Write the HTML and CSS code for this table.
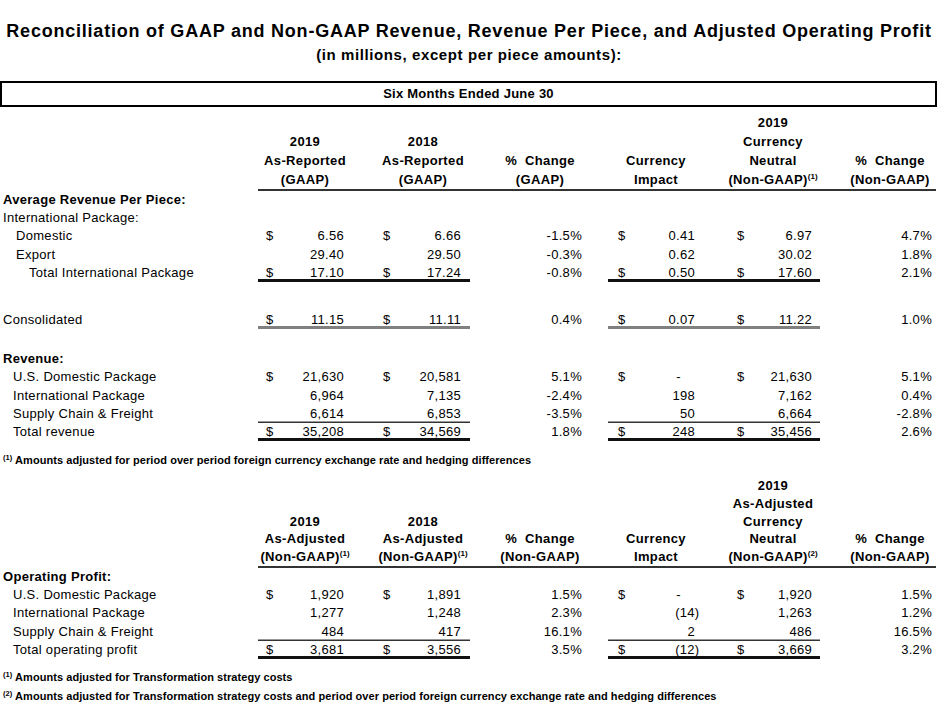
FILE: index.html
```html
<!DOCTYPE html>
<html>
<head>
<meta charset="utf-8">
<link rel="stylesheet" href="styles.css">
</head>
<body>
<div class="page">
  <h1 class="title">Reconciliation of GAAP and Non-GAAP Revenue, Revenue Per Piece, and Adjusted Operating Profit</h1>
  <p class="subtitle">(in millions, except per piece amounts):</p>
  <div class="period">Six Months Ended June 30</div>

  <div class="hdr hdr1">
    <div class="hgrid">
      <div class="hc">2019<br>As-Reported<br>(GAAP)</div>
      <div class="hc">2018<br>As-Reported<br>(GAAP)</div>
      <div class="hc">% &nbsp;Change<br>(GAAP)</div>
      <div class="hc">Currency<br>Impact</div>
      <div class="hc">2019<br>Currency<br>Neutral<br>(Non-GAAP)<span class="sup">(1)</span></div>
      <div class="hc hc-last">% &nbsp;Change<br>(Non-GAAP)</div>
    </div>
  </div>

  <div class="row"><div class="lab b i0">Average Revenue Per Piece:</div></div>
  <div class="row"><div class="lab i0">International Package:</div></div>
  <div class="row">
    <div class="lab i1">Domestic</div>
    <div class="m ma"><span>$</span><span>6.56</span></div><div class="sp"></div>
    <div class="m mb"><span>$</span><span>6.66</span></div>
    <div class="pct">-1.5%</div>
    <div class="m mc"><span>$</span><span>0.41</span></div><div class="sp"></div>
    <div class="m md"><span>$</span><span>6.97</span></div>
    <div class="pct2">4.7%</div>
  </div>
  <div class="row">
    <div class="lab i1">Export</div>
    <div class="m ma"><span></span><span>29.40</span></div><div class="sp"></div>
    <div class="m mb"><span></span><span>29.50</span></div>
    <div class="pct">-0.3%</div>
    <div class="m mc"><span></span><span>0.62</span></div><div class="sp"></div>
    <div class="m md"><span></span><span>30.02</span></div>
    <div class="pct2">1.8%</div>
  </div>
  <div class="row dbl">
    <div class="lab i2">Total International Package</div>
    <div class="m ma"><span>$</span><span>17.10</span></div><div class="sp"></div>
    <div class="m mb"><span>$</span><span>17.24</span></div>
    <div class="pct">-0.8%</div>
    <div class="m mc"><span>$</span><span>0.50</span></div><div class="sp"></div>
    <div class="m md"><span>$</span><span>17.60</span></div>
    <div class="pct2">2.1%</div>
  </div>

  <div class="row dbl-gray gap-cons">
    <div class="lab i0">Consolidated</div>
    <div class="m ma"><span>$</span><span>11.15</span></div><div class="sp"></div>
    <div class="m mb"><span>$</span><span>11.11</span></div>
    <div class="pct">0.4%</div>
    <div class="m mc"><span>$</span><span>0.07</span></div><div class="sp"></div>
    <div class="m md"><span>$</span><span>11.22</span></div>
    <div class="pct2">1.0%</div>
  </div>

  <div class="row gap-rev"><div class="lab b i0">Revenue:</div></div>
  <div class="row">
    <div class="lab i1b">U.S. Domestic Package</div>
    <div class="m ma"><span>$</span><span>21,630</span></div><div class="sp"></div>
    <div class="m mb"><span>$</span><span>20,581</span></div>
    <div class="pct">5.1%</div>
    <div class="m mc"><span>$</span><span class="zero">-</span></div><div class="sp"></div>
    <div class="m md"><span>$</span><span>21,630</span></div>
    <div class="pct2">5.1%</div>
  </div>
  <div class="row">
    <div class="lab i1b">International Package</div>
    <div class="m ma"><span></span><span>6,964</span></div><div class="sp"></div>
    <div class="m mb"><span></span><span>7,135</span></div>
    <div class="pct">-2.4%</div>
    <div class="m mc"><span></span><span>198</span></div><div class="sp"></div>
    <div class="m md"><span></span><span>7,162</span></div>
    <div class="pct2">0.4%</div>
  </div>
  <div class="row single">
    <div class="lab i1b">Supply Chain &amp; Freight</div>
    <div class="m ma"><span></span><span>6,614</span></div><div class="sp"></div>
    <div class="m mb"><span></span><span>6,853</span></div>
    <div class="pct">-3.5%</div>
    <div class="m mc"><span></span><span>50</span></div><div class="sp"></div>
    <div class="m md"><span></span><span>6,664</span></div>
    <div class="pct2">-2.8%</div>
  </div>
  <div class="row dbl">
    <div class="lab i1b">Total revenue</div>
    <div class="m ma"><span>$</span><span>35,208</span></div><div class="sp"></div>
    <div class="m mb"><span>$</span><span>34,569</span></div>
    <div class="pct">1.8%</div>
    <div class="m mc"><span>$</span><span>248</span></div><div class="sp"></div>
    <div class="m md"><span>$</span><span>35,456</span></div>
    <div class="pct2">2.6%</div>
  </div>

  <p class="note note-a"><span class="fsup">(1)</span> Amounts adjusted for period over period foreign currency exchange rate and hedging differences</p>

  <div class="hdr hdr2">
    <div class="hgrid">
      <div class="hc">2019<br>As-Adjusted<br>(Non-GAAP)<span class="sup">(1)</span></div>
      <div class="hc">2018<br>As-Adjusted<br>(Non-GAAP)<span class="sup">(1)</span></div>
      <div class="hc">% &nbsp;Change<br>(Non-GAAP)</div>
      <div class="hc">Currency<br>Impact</div>
      <div class="hc">2019<br>As-Adjusted<br>Currency<br>Neutral<br>(Non-GAAP)<span class="sup">(2)</span></div>
      <div class="hc hc-last">% &nbsp;Change<br>(Non-GAAP)</div>
    </div>
  </div>

  <div class="row"><div class="lab b i0">Operating Profit:</div></div>
  <div class="row">
    <div class="lab i1b">U.S. Domestic Package</div>
    <div class="m ma"><span>$</span><span>1,920</span></div><div class="sp"></div>
    <div class="m mb"><span>$</span><span>1,891</span></div>
    <div class="pct">1.5%</div>
    <div class="m mc"><span>$</span><span class="zero">-</span></div><div class="sp"></div>
    <div class="m md"><span>$</span><span>1,920</span></div>
    <div class="pct2">1.5%</div>
  </div>
  <div class="row">
    <div class="lab i1b">International Package</div>
    <div class="m ma"><span></span><span>1,277</span></div><div class="sp"></div>
    <div class="m mb"><span></span><span>1,248</span></div>
    <div class="pct">2.3%</div>
    <div class="m mc"><span></span><span class="neg">(14)</span></div><div class="sp"></div>
    <div class="m md"><span></span><span>1,263</span></div>
    <div class="pct2">1.2%</div>
  </div>
  <div class="row single">
    <div class="lab i1b">Supply Chain &amp; Freight</div>
    <div class="m ma"><span></span><span>484</span></div><div class="sp"></div>
    <div class="m mb"><span></span><span>417</span></div>
    <div class="pct">16.1%</div>
    <div class="m mc"><span></span><span>2</span></div><div class="sp"></div>
    <div class="m md"><span></span><span>486</span></div>
    <div class="pct2">16.5%</div>
  </div>
  <div class="row dbl">
    <div class="lab i1b">Total operating profit</div>
    <div class="m ma"><span>$</span><span>3,681</span></div><div class="sp"></div>
    <div class="m mb"><span>$</span><span>3,556</span></div>
    <div class="pct">3.5%</div>
    <div class="m mc"><span>$</span><span class="neg">(12)</span></div><div class="sp"></div>
    <div class="m md"><span>$</span><span>3,669</span></div>
    <div class="pct2">3.2%</div>
  </div>

  <p class="note note-b"><span class="fsup">(1)</span> Amounts adjusted for Transformation strategy costs</p>
  <p class="note"><span class="fsup">(2)</span> Amounts adjusted for Transformation strategy costs and period over period foreign currency exchange rate and hedging differences</p>
</div>
</body>
</html>
```

FILE: styles.css
```css
html, body {
  margin: 0;
  padding: 0;
  background: #fff;
}
body {
  font-family: "Liberation Sans", Arial, sans-serif;
  color: #000;
  overflow: hidden;
}
.page {
  width: 938px;
  padding-top: 20px;
}
.title {
  margin: 0;
  font-size: 18px;
  line-height: 22px;
  font-weight: bold;
  text-align: center;
  letter-spacing: 0.78px;
  white-space: nowrap;
}
.subtitle {
  margin: 3px 0 0;
  font-size: 15px;
  line-height: 20px;
  font-weight: bold;
  text-align: center;
  letter-spacing: 0.6px;
}
.period {
  margin-top: 16px;
  width: 937px;
  height: 26px;
  box-sizing: border-box;
  border: 2px solid #000;
  font-size: 13px;
  line-height: 22px;
  font-weight: bold;
  text-align: center;
  letter-spacing: 0.25px;
}

/* column headers */
.hdr {
  margin-left: 258px;
  width: 678px;
  border-bottom: 2px solid #333;
}
.hdr1 { margin-top: 6px; }
.hdr2 { margin-top: 8px; }
.hgrid {
  margin-left: -12px;
  display: grid;
  grid-template-columns: 118px 118px 116px 116px 118px 104px;
  align-items: end;
}
.hc {
  text-align: center;
  font-size: 13px;
  font-weight: bold;
  letter-spacing: 0.35px;
  white-space: nowrap;
}
.hdr1 .hc { line-height: 19px; }
.hdr2 .hc { line-height: 17.8px; }
.hc-last { padding-left: 12px; }
.sup {
  font-size: 8px;
  line-height: 0;
  vertical-align: 5px;
  letter-spacing: 0;
}

/* data rows */
.row {
  display: grid;
  grid-template-columns: 258px 94px 24px 94px 138px 94px 24px 94px 116px;
  height: 18.2px;
  line-height: 18.2px;
  font-size: 13px;
  letter-spacing: 0.3px;
  white-space: nowrap;
}
.lab { padding-left: 3px; }
.lab.b { font-weight: bold; letter-spacing: 0.3px; }
.i0 { padding-left: 3px; }
.i1 { padding-left: 16px; }
.i1b { padding-left: 13px; }
.i2 { padding-left: 29px; }
.m {
  display: flex;
  justify-content: space-between;
}
.ma { padding: 0 8px 0 8px; }
.mb { padding: 0 9px 0 7px; }
.mc { padding: 0 7px 0 10px; }
.md { padding: 0 8px 0 11px; }
.pct { text-align: right; padding-right: 26px; }
.pct2 { text-align: right; padding-right: 4px; }
.zero { margin-right: 14px; }
.neg { margin-right: -4.5px; }

.gap-cons { margin-top: 29px; }
.gap-rev { margin-top: 21px; }

.single .m, .single .sp { box-shadow: inset 0 -1.5px 0 #333; }
.dbl .m, .dbl .sp { box-shadow: inset 0 -3px 0 #111; }
.dbl-gray .m, .dbl-gray .sp { box-shadow: inset 0 -3px 0 #808080; }

/* footnotes */
.note {
  margin: 0;
  padding-left: 3px;
  font-size: 11px;
  line-height: 19px;
  font-weight: bold;
  letter-spacing: 0.06px;
  white-space: nowrap;
}
.note-a { margin-top: 10px; line-height: 18px; }
.note-b { margin-top: 9px; }
.fsup {
  font-size: 7.5px;
  vertical-align: 4px;
  line-height: 0;
}
```
